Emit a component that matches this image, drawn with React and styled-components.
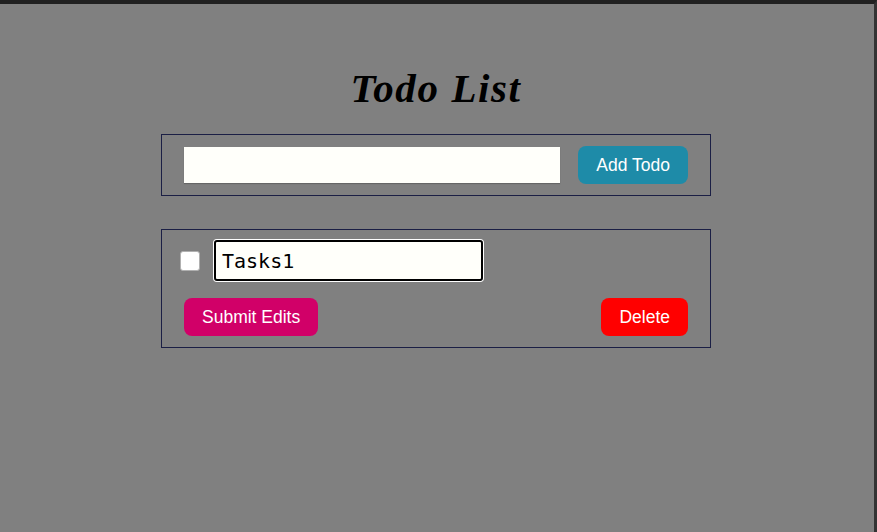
import React, { useState } from 'react';
import styled, { createGlobalStyle } from 'styled-components';

const GlobalStyle = createGlobalStyle`
  html, body {
    margin: 0;
    padding: 0;
    background: #808080;
  }
  body {
    font-family: "Liberation Sans", Arial, sans-serif;
  }
  * { box-sizing: border-box; }
`

const Page = styled.div`
  min-height: 532px;
  border-top: 4px solid #212121;
  border-right: 3px solid #333333;
  background: #808080;
  display: flex;
  flex-direction: column;
  align-items: center;
  padding: 63px 2px 0 0;
`

const Title = styled.h1`
  margin: 0 0 24px;
  font-family: "Liberation Serif", Georgia, serif;
  font-style: italic;
  font-weight: bold;
  font-size: 41px;
  line-height: 43px;
  letter-spacing: 1.6px;
  color: #000;
`

const Panel = styled.div`
  width: 550px;
  border: 1px solid #1b1f45;
`

const AddForm = styled(Panel).attrs({ as: 'form' })`
  height: 62px;
  display: flex;
  align-items: center;
  justify-content: space-between;
  padding: 0 22px;
  margin-bottom: 33px;
`

const NewInput = styled.input`
  width: 376px;
  height: 36px;
  border: none;
  background: #fffffa;
  box-shadow: 0 1px 1px rgba(0, 0, 0, 0.2);
  outline: none;
  font-size: 18px;
  padding: 0 8px;
`

const Button = styled.button`
  height: 38px;
  padding: 0 18px;
  border: none;
  border-radius: 8px;
  background: ${p => p.$bg};
  color: #fff;
  font-family: "Liberation Sans", Arial, sans-serif;
  font-size: 17.5px;
  cursor: pointer;
`

const TodoCard = styled(Panel)`
  padding: 10px 22px 11px 18px;
  display: flex;
  flex-direction: column;
  gap: 17px;
`

const EditRow = styled.div`
  display: flex;
  align-items: center;
  gap: 14px;
`

const Check = styled.input.attrs({ type: 'checkbox' })`
  appearance: none;
  margin: 0;
  width: 20px;
  height: 20px;
  background: #fff;
  border: 1px solid #b0b0b0;
  border-radius: 3px;
`

const EditInput = styled.input`
  width: 269px;
  height: 41px;
  border: 2px solid #000;
  border-radius: 3px;
  box-shadow: 0 0 0 1px #fff;
  background: #fffffa;
  font-family: "DejaVu Sans Mono", "Liberation Mono", monospace;
  font-size: 20px;
  padding: 0 6px;
  outline: none;
`

const ActionRow = styled.div`
  display: flex;
  justify-content: space-between;
  padding-left: 4px;
`

export default function App() {
  const [text, setText] = useState('Tasks1');
  return (
    <>
      <GlobalStyle />
      <Page>
        <Title>Todo List</Title>
        <AddForm onSubmit={e => e.preventDefault()}>
          <NewInput type="text" />
          <Button type="submit" $bg="#1e8ba8">Add Todo</Button>
        </AddForm>
        <TodoCard>
          <EditRow>
            <Check />
            <EditInput value={text} onChange={e => setText(e.target.value)} />
          </EditRow>
          <ActionRow>
            <Button $bg="#d10068">Submit Edits</Button>
            <Button $bg="#ff0000">Delete</Button>
          </ActionRow>
        </TodoCard>
      </Page>
    </>
  );
}
